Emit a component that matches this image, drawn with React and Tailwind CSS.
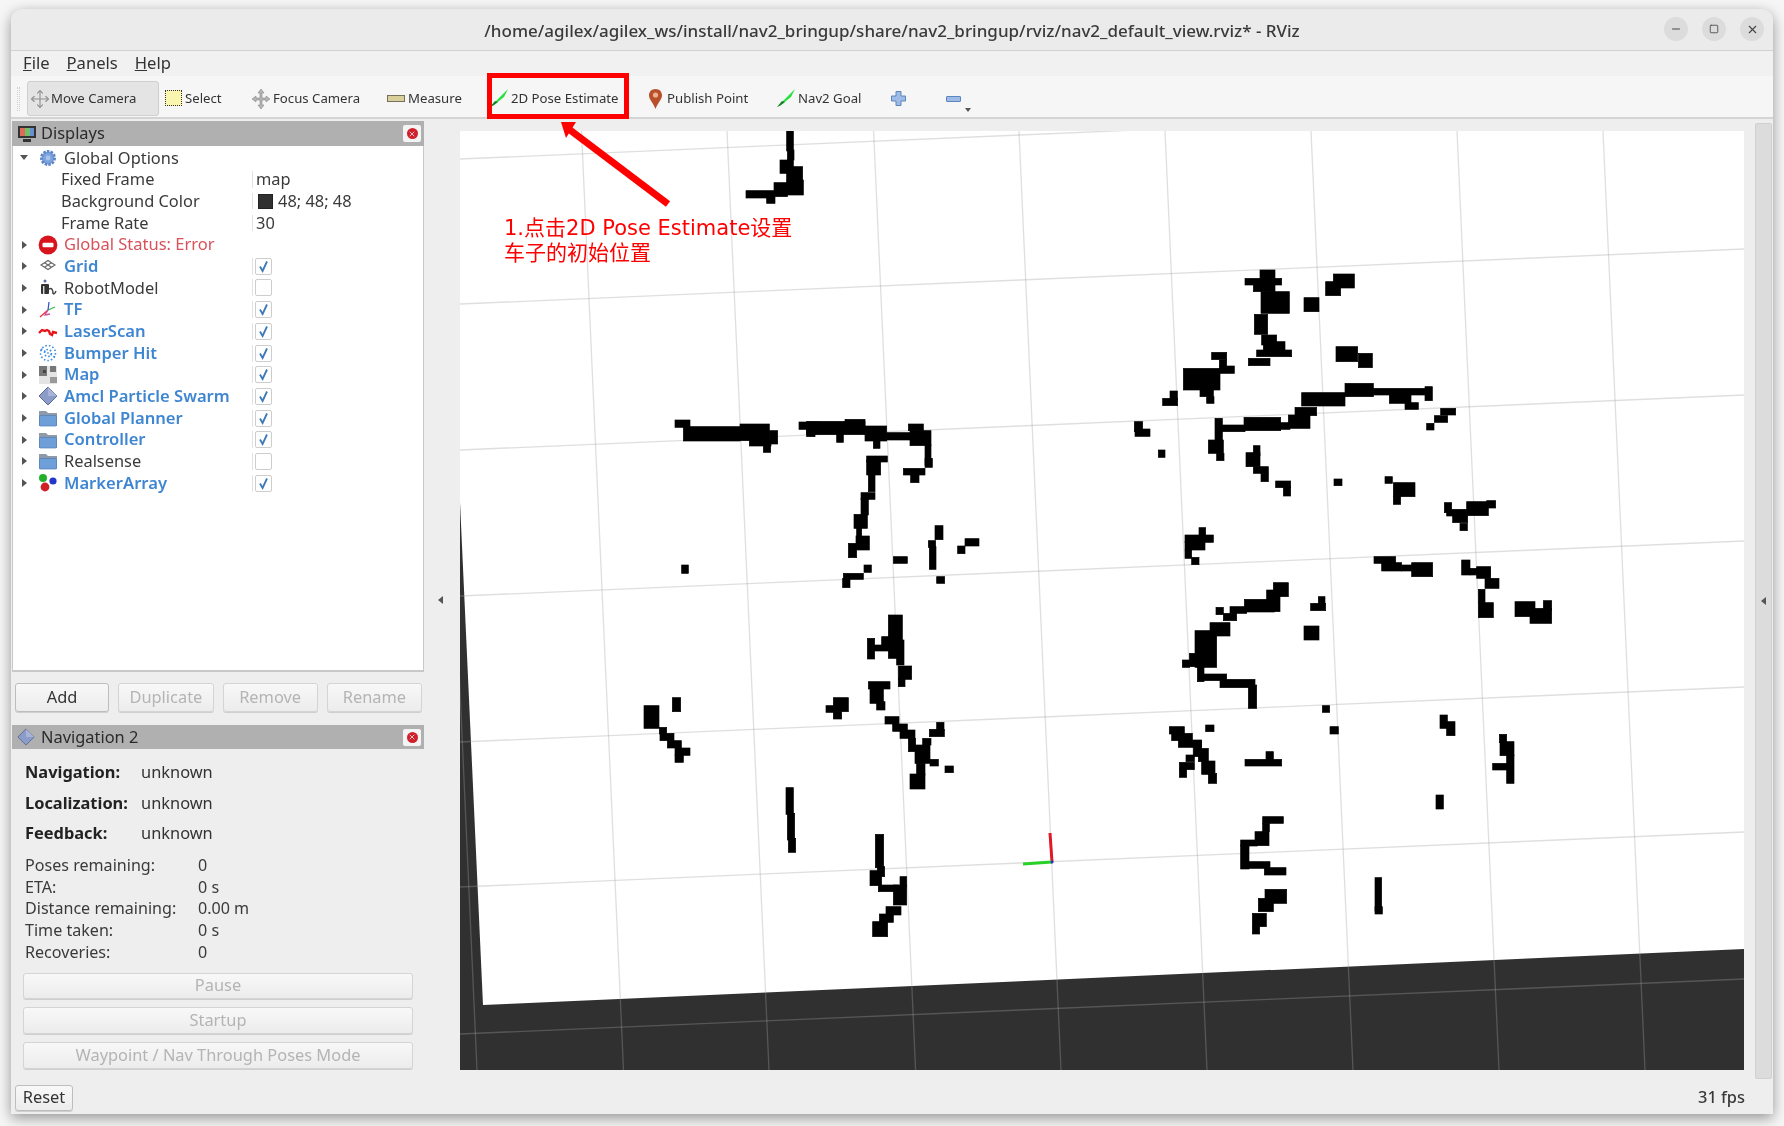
import { Minus, Square, X, Move } from 'lucide-react'

const UI_FONT = "font-['Noto_Sans','Open_Sans',sans-serif]"

// obstacle blocks, traced per crop: [originX, originY, rects in crop pixels (3x)]
const MAP_CHUNKS = [
  [450, 120, [[1010,33,20,60],[1012,90,20,30],[990,120,40,40],[1010,140,48,40],[1010,180,50,45],[972,188,40,42],[888,212,85,22],[950,225,25,25]]],
  [640, 380, [
    [105,120,45,22],[130,140,170,43],[300,132,88,50],[388,152,25,40],[328,180,65,18],[370,195,22,22],
    [477,126,60,22],[500,124,175,40],[500,145,25,25],[590,160,20,27],[615,118,60,40],[675,138,65,45],[700,180,20,25],[740,158,70,22],[805,132,45,20],[810,152,63,45],[855,195,18,60],[855,235,22,27],[790,265,65,20],[812,285,25,23],
    [680,228,62,18],[680,240,42,45],[685,285,20,50],[663,338,42,20],[663,355,22,50],[642,403,40,42],[650,440,15,30],[648,468,40,42],[625,490,25,43],
    [125,555,20,25],[885,437,24,42],[865,482,22,20],[868,500,20,68],[975,476,42,22],[953,498,22,23],[760,530,42,20],[672,555,22,22],[610,580,60,18],[608,595,22,28],[890,590,24,20],
    [745,705,42,130],[682,775,22,62],[700,795,50,18],[725,770,30,40],[770,780,22,75],
  ]],
  [640, 620, [
    [775,138,40,40],[775,175,20,25],[685,185,65,22],[690,205,40,45],[710,245,25,25],
    [12,257,45,68],[97,233,25,42],[58,322,22,20],[60,340,42,22],[82,362,42,22],[105,384,45,22],[105,405,25,22],
    [580,233,45,42],[558,257,30,20],[580,275,25,22],
    [735,290,42,22],[758,312,44,22],[780,330,45,25],[805,355,22,40],[848,355,25,20],[868,328,45,22],[890,307,22,25],[825,375,45,55],[870,418,25,20],[830,430,25,35],[810,462,45,45],[915,438,25,20],
    [438,503,22,80],[442,580,22,80],[445,655,22,42],
    [706,643,25,100],[712,740,22,30],[690,752,35,45],[715,795,60,20],[760,795,40,60],[780,770,20,30],[738,860,45,25],[718,882,42,25],[698,905,45,45],
  ]],
  [1100, 250, [
    [480,60,45,40],[435,85,110,20],[460,100,65,25],[483,125,85,65],[463,193,40,60],[485,255,45,30],[490,275,65,30],[470,300,105,20],[445,325,65,22],
    [677,95,45,42],[700,72,63,42],[612,143,45,42],[708,290,65,45],[775,310,42,43],
    [335,307,45,22],[358,330,22,20],[358,348,45,22],[250,355,110,65],[300,415,40,25],[320,440,22,20],[188,445,45,22],[210,423,22,25],
    [345,505,22,70],[365,525,70,20],[432,502,110,40],[540,518,30,20],[565,495,65,40],[585,472,65,25],[605,428,130,40],[735,400,85,40],[820,415,175,20],[868,435,65,25],[915,458,40,20],[975,410,22,42],
    [325,570,45,40],[350,610,22,22],[1022,475,45,20],[1003,497,40,20],[980,520,22,20],[103,515,25,30],[105,537,45,22],[175,600,20,22],
    [460,587,20,30],[438,608,42,42],[460,650,45,20],[483,670,22,25],[527,693,45,20],[550,710,22,28],[702,687,24,20],
    [855,680,22,20],[880,698,65,42],[880,738,22,25],[1033,758,22,30],[1040,778,60,20],[1058,798,45,20],[1080,820,22,22],[1100,755,65,42],[1160,752,27,22],
    [297,833,20,25],[255,855,85,22],[255,875,60,25],[255,900,20,25],[275,922,22,22],
    [822,920,65,20],[845,938,60,25],[905,945,30,18],[935,938,63,42],[1085,930,25,45],[1110,955,60,20],[1130,950,42,35],[1155,985,42,30],[1135,1018,20,40],[1135,1058,45,45],[1245,1055,60,45],[1290,1075,65,45],[1330,1052,25,30],
    [500,1020,40,65],[520,998,45,42],[433,1048,90,38],[390,1070,50,20],[370,1090,40,22],[348,1072,22,22],[632,1060,45,22],[655,1040,20,22],
  ]],
  [1140, 600, [
    [165,92,65,110],[210,68,60,40],[148,160,65,40],[127,180,22,22],[172,200,20,45],[190,222,70,20],[240,238,105,25],[325,255,25,70],
    [492,78,45,42],[547,317,22,20],[570,380,25,22],
    [88,380,45,22],[95,400,62,22],[115,420,70,22],[160,425,25,45],[175,445,30,40],[185,483,40,40],[205,520,25,30],[138,465,25,20],[118,487,45,22],[118,507,22,25],
    [197,375,25,20],[315,478,110,20],[378,455,22,25],[900,345,22,40],[920,365,25,42],
    [1078,403,22,25],[1080,425,42,42],[1100,465,22,85],[1058,490,50,20],[888,585,22,42],
    [368,650,62,20],[368,670,20,25],[345,695,42,42],[302,720,50,18],[302,735,25,72],[325,785,65,20],[373,803,65,22],
    [705,833,20,100],[705,920,22,22],[375,868,65,42],[355,895,45,40],[337,940,42,40],[337,980,22,22],
  ]],
]

const VERTICALS = [477, 623.5, 769, 915.6, 1061, 1207, 1353, 1499, 1645]
const HORIZONTALS = [159, 304, 450, 596, 742, 887, 1034]

function GearIcon() {
  return (
    <svg width="18" height="18" viewBox="0 0 18 18">
      <circle cx="9" cy="9" r="6.5" fill="#7da3dc" stroke="#5f87c8" strokeWidth="3" strokeDasharray="2.4 1.2" />
      <circle cx="9" cy="9" r="2.4" fill="#a9c3ea" />
    </svg>
  )
}

function GridIcon() {
  return (
    <svg width="18" height="18" viewBox="0 0 18 18" fill="none" stroke="#666" strokeWidth="1.1">
      <path d="M2 8 L9 3.5 L16 8 L9 12.5 Z" />
      <path d="M5.5 5.8 L12.5 10.2 M12.5 5.8 L5.5 10.2" />
    </svg>
  )
}

function RobotIcon() {
  return (
    <svg width="20" height="20" viewBox="0 0 20 20">
      <circle cx="7" cy="3" r="1.5" fill="#5570a8" />
      <rect x="3" y="6" width="8" height="10" rx="1" fill="#333" />
      <rect x="5" y="8" width="1.4" height="8" fill="#ddd" />
      <path d="M11 11 Q15 9 15 16 M15 16 Q17 16 18 13" stroke="#444" strokeWidth="1.4" fill="none" />
    </svg>
  )
}

function TfIcon() {
  return (
    <svg width="20" height="20" viewBox="0 0 20 20" strokeWidth="1.3" fill="none">
      <path d="M10 10 L2 17" stroke="#e03030" />
      <path d="M10 10 L17 7" stroke="#30c040" />
      <path d="M10 10 L11 2" stroke="#3050d0" />
      <path d="M10 10 L7 15 L12 14" stroke="#d050a0" />
    </svg>
  )
}

function LaserIcon() {
  return (
    <svg width="20" height="20" viewBox="0 0 20 20" fill="none">
      <path d="M1 12 L4 9 L7 10 L9 9 L11 10 L12 13 L14 14 L15 11 L19 12" stroke="#e8141c" strokeWidth="2.4" />
    </svg>
  )
}

function BumperIcon() {
  return (
    <svg width="20" height="20" viewBox="0 0 20 20" stroke="#3f8fe0" strokeWidth="1.6" strokeDasharray="1.6 2" fill="none">
      <circle cx="10" cy="10" r="7.5" />
      <circle cx="10" cy="10" r="3.5" />
      <path d="M3 6 L17 14" />
    </svg>
  )
}

function MapIcon() {
  return (
    <svg width="20" height="20" viewBox="0 0 20 20">
      <rect x="1" y="1" width="18" height="18" fill="#e4e4e4" />
      <rect x="1" y="1" width="8" height="10" fill="#777" />
      <rect x="12" y="1" width="6" height="6" fill="#777" />
      <rect x="12" y="12" width="7" height="6" fill="#999" />
      <rect x="5" y="5" width="3" height="3" fill="#444" />
    </svg>
  )
}

function DiamondIcon({ size = 20 }) {
  return (
    <svg width={size} height={size} viewBox="0 0 20 20">
      <path d="M10 1 L19 10 L10 19 L1 10 Z" fill="#8c9cc8" stroke="#5d6a94" strokeWidth="1" />
      <path d="M10 1 L19 10 L10 10 Z" fill="#a8b4d6" />
    </svg>
  )
}

function FolderIcon() {
  return (
    <svg width="20" height="20" viewBox="0 0 20 20">
      <path d="M1 3 L8 3 L10 5 L19 5 L19 18 L1 18 Z" fill="#8f9aa8" />
      <rect x="1.5" y="7.5" width="17" height="10.5" rx="1" fill="#6f9fd8" stroke="#4f7fb8" strokeWidth="0.7" />
    </svg>
  )
}

function MarkerIcon() {
  return (
    <svg width="20" height="20" viewBox="0 0 20 20">
      <circle cx="5" cy="5" r="4" fill="#22b02a" />
      <circle cx="15" cy="8" r="3.6" fill="#2236c8" />
      <circle cx="7" cy="14" r="4.4" fill="#d01f25" />
    </svg>
  )
}

function ErrorIcon() {
  return (
    <svg width="20" height="20" viewBox="0 0 20 20">
      <circle cx="10" cy="10" r="9.4" fill="#d8141c" />
      <rect x="4.5" y="7.8" width="11" height="4.4" rx="1" fill="#fff" />
    </svg>
  )
}

function Check() {
  return (
    <svg width="13" height="13" viewBox="0 0 13 13" fill="none">
      <path d="M3 6.5 L5.6 11 L10 1.5" stroke="#3d78b8" strokeWidth="1.8" />
    </svg>
  )
}

function Checkbox({ on }) {
  return (
    <span className="flex h-[17px] w-[17px] items-center justify-center rounded-[2px] border border-[#cdcdcd] bg-white">
      {on && <Check />}
    </span>
  )
}

function CloseBadge() {
  return (
    <span className="flex h-[17px] w-[18px] items-center justify-center rounded-[2px] bg-[#f4f4f4]">
      <span className="flex h-[11px] w-[11px] items-center justify-center rounded-full bg-[#d0202c]">
        <X size={8} strokeWidth={3} color="#f3c0c0" />
      </span>
    </span>
  )
}

function TreeRow({ icon, name, kind, checked, value, arrow = 'right', indent }) {
  const nameColor =
    kind === 'on'
      ? 'text-[16.6px] text-[#3f86d2] font-semibold'
      : kind === 'error'
        ? 'text-[16.5px] text-[#d8525a]'
        : 'text-[#3a3a3a]'
  return (
    <div className="flex h-[21.7px] items-center text-[16.4px] leading-none">
      <div className="flex w-[239px] items-center">
        <span className="flex w-[20px] justify-center pl-[2px]">
          {arrow === 'right' && <span className="h-0 w-0 border-y-[4px] border-l-[5px] border-y-transparent border-l-[#555]" />}
          {arrow === 'down' && <span className="h-0 w-0 border-x-[4px] border-t-[5px] border-x-transparent border-t-[#555]" />}
        </span>
        {indent ? (
          <span className="w-[28px]" />
        ) : (
          <span className="flex w-[31px] items-center justify-center pr-[2px]">{icon}</span>
        )}
        <span className={`whitespace-nowrap ${nameColor}`}>{name}</span>
      </div>
      <div className="flex flex-1 items-center border-l border-[#e2e2e2] pl-[3px] text-[#3a3a3a]">
        {checked !== undefined ? <span className="-ml-[1px]"><Checkbox on={checked} /></span> : value}
      </div>
    </div>
  )
}

function QtButton({ children, disabled, className = '' }) {
  return (
    <button
      className={`flex items-center justify-center rounded-[3px] border bg-gradient-to-b from-[#f8f8f8] to-[#ececec] text-[16.4px] shadow-[0_1px_0_#cfcfcf] ${
        disabled ? 'border-[#d4d4d4] text-[#b4b4b4]' : 'border-[#bdbdbd] text-[#333]'
      } ${className}`}
    >
      {children}
    </button>
  )
}

function StatRow({ label, value }) {
  return (
    <div className="flex h-[21.7px] items-center text-[16.1px] text-[#3a3a3a]">
      <span className="w-[173px]">{label}</span>
      <span>{value}</span>
    </div>
  )
}

function BoldRow({ label }) {
  return (
    <div className="flex h-[30.7px] items-center text-[#333]">
      <span className="w-[116px] font-bold text-[#222]">{label}</span>
      <span>unknown</span>
    </div>
  )
}

function DisplaysPanel() {
  return (
    <div className="flex flex-col">
      <div className="flex h-[25px] items-center bg-[#b0b0b0] pl-[5px] pr-[3px] text-[16.4px] text-[#2b2b2b]">
        <svg width="20" height="20" viewBox="0 0 20 20" className="mr-[4px]">
          <rect x="1" y="2" width="18" height="12" fill="#333" />
          <rect x="3" y="4" width="5" height="8" fill="#e06a5a" />
          <rect x="8" y="4" width="5" height="8" fill="#6fbf6a" />
          <rect x="13" y="4" width="4" height="8" fill="#6a8fd0" />
          <rect x="6" y="15" width="8" height="3" fill="#333" />
        </svg>
        <span className="flex-1">Displays</span>
        <CloseBadge />
      </div>
      <div className="h-[526px] border-x border-b-2 border-[#c8c8c8] bg-white pt-[1px]">
        <TreeRow arrow="down" icon={<GearIcon />} name="Global Options" />
        <TreeRow arrow="none" indent name="Fixed Frame" value="map" />
        <TreeRow
          arrow="none"
          indent
          name="Background Color"
          value={
            <span className="flex items-center gap-[5px] pl-[2px]">
              <span className="h-[15px] w-[15px] border border-[#222] bg-[#303030]" />
              48; 48; 48
            </span>
          }
        />
        <TreeRow arrow="none" indent name="Frame Rate" value="30" />
        <TreeRow icon={<ErrorIcon />} name="Global Status: Error" kind="error" />
        <TreeRow icon={<GridIcon />} name="Grid" kind="on" checked />
        <TreeRow icon={<RobotIcon />} name="RobotModel" checked={false} />
        <TreeRow icon={<TfIcon />} name="TF" kind="on" checked />
        <TreeRow icon={<LaserIcon />} name="LaserScan" kind="on" checked />
        <TreeRow icon={<BumperIcon />} name="Bumper Hit" kind="on" checked />
        <TreeRow icon={<MapIcon />} name="Map" kind="on" checked />
        <TreeRow icon={<DiamondIcon />} name="Amcl Particle Swarm" kind="on" checked />
        <TreeRow icon={<FolderIcon />} name="Global Planner" kind="on" checked />
        <TreeRow icon={<FolderIcon />} name="Controller" kind="on" checked />
        <TreeRow icon={<FolderIcon />} name="Realsense" checked={false} />
        <TreeRow icon={<MarkerIcon />} name="MarkerArray" kind="on" checked />
      </div>
      <div className="flex gap-[9px] pl-[3px] pr-[2px] pt-[11px]">
        <QtButton className="h-[29px] w-[95px]">Add</QtButton>
        <QtButton disabled className="h-[29px] w-[96px]">Duplicate</QtButton>
        <QtButton disabled className="h-[29px] w-[96px]">Remove</QtButton>
        <QtButton disabled className="h-[29px] w-[96px]">Rename</QtButton>
      </div>
    </div>
  )
}

function NavigationPanel() {
  return (
    <div className="mt-[13px] flex flex-1 flex-col text-[16.4px]">
      <div className="flex h-[24px] items-center bg-[#b0b0b0] pl-[5px] pr-[3px] text-[#2b2b2b]">
        <DiamondIcon size={18} />
        <span className="ml-[6px] flex-1">Navigation 2</span>
        <CloseBadge />
      </div>
      <div className="pl-[13px] pt-[8px]">
        <BoldRow label="Navigation:" />
        <BoldRow label="Localization:" />
        <BoldRow label="Feedback:" />
        <div className="mt-[5px]">
          <StatRow label="Poses remaining:" value="0" />
          <StatRow label="ETA:" value="0 s" />
          <StatRow label="Distance remaining:" value="0.00 m" />
          <StatRow label="Time taken:" value="0 s" />
          <StatRow label="Recoveries:" value="0" />
        </div>
      </div>
      <div className="flex flex-col gap-[8px] pl-[11px] pr-[11px] pt-[10px]">
        <QtButton disabled className="h-[26px] w-full">Pause</QtButton>
        <QtButton disabled className="h-[27px] w-full">Startup</QtButton>
        <QtButton disabled className="h-[27px] w-full">Waypoint / Nav Through Poses Mode</QtButton>
      </div>
    </div>
  )
}

function Viewport() {
  const plane = '460,131 1744,131 1744,949 483,1005 460,502'
  return (
    <div className="h-[939px] w-[1284px] overflow-hidden">
      <svg width="1284" height="939" viewBox="460 131 1284 939" className="block bg-[#303030]">
        <polygon points={plane} fill="#ffffff" />
        <g stroke="#a0a0a0" strokeOpacity="0.34" strokeWidth="1.3">
          {VERTICALS.map((x) => (
            <line key={x} x1={x - 42} y1={131} x2={x} y2={1070} />
          ))}
          {HORIZONTALS.map((y) => (
            <line key={y} x1={460} y1={y} x2={1744} y2={y - 55} />
          ))}
        </g>
        <g fill="#000000" stroke="#000000" strokeWidth="2">
          {MAP_CHUNKS.map(([ox, oy, rects], i) => (
            <g key={i} transform={`translate(${ox} ${oy}) scale(${1 / 3})`}>
              {rects.map((r, j) => (
                <rect key={j} x={r[0]} y={r[1]} width={r[2]} height={r[3]} />
              ))}
            </g>
          ))}
        </g>
        <line x1="1050" y1="833" x2="1052" y2="862" stroke="#e01828" strokeWidth="3" />
        <line x1="1023" y1="864" x2="1052" y2="862" stroke="#28d028" strokeWidth="3" />
        <circle cx="1052" cy="862" r="1.5" fill="#2030d0" />
      </svg>
    </div>
  )
}

function ToolItem({ icon, label, width, gap = 'gap-[2px]' }) {
  return (
    <div className={`flex shrink-0 items-center ${gap} ${width}`}>
      {icon}
      <span className="whitespace-nowrap text-[13.2px] text-[#333]">{label}</span>
    </div>
  )
}

function PoseArrow() {
  return (
    <svg width="18" height="18" viewBox="0 0 18 18">
      <path d="M0 18 L12 6 L18 0 L14 8 L4 16 Z" fill="#28e040" />
      <path d="M0 18 L5 12 L8 13 L4 16 Z" fill="#14802a" />
    </svg>
  )
}

function Toolbar() {
  return (
    <div className="flex h-[43px] items-center border-b-2 border-[#d4d4d4] bg-[#f6f6f6] pl-[6px] pt-[4px]">
      <div className="mr-[7px] h-[24px] w-[3px] border-x border-dotted border-[#cfcfcf]" />
      <div className="mr-[6px] flex h-[35px] w-[132px] items-center gap-[1px] rounded-[3px] border border-[#cfcfcf] bg-[#e4e4e4] pl-[2px]">
        <Move size={20} color="#8d8d8d" strokeWidth={1.3} />
        <span className="whitespace-nowrap text-[13.2px] text-[#333]">Move Camera</span>
      </div>
      <ToolItem
        width="w-[87px]"
        gap="gap-[3px]"
        icon={<span className="h-[16px] w-[17px] border border-dotted border-[#333] bg-[#faf6b0]" />}
        label="Select"
      />
      <ToolItem
        width="w-[135px]"
        gap="gap-[3px]"
        icon={
          <svg width="18" height="20" viewBox="0 0 18 20">
            <path d="M9 0 L12 4 L10 4 L10 9 L14 9 L14 7 L18 10 L14 13 L14 11 L10 11 L10 16 L12 16 L9 20 L6 16 L8 16 L8 11 L4 11 L4 13 L0 10 L4 7 L4 9 L8 9 L8 4 L6 4 Z" fill="#b4b4b4" stroke="#8c8c8c" strokeWidth="0.6" />
          </svg>
        }
        label="Focus Camera"
      />
      <ToolItem
        width="w-[103px]"
        gap="gap-[3px]"
        icon={<span className="h-[7px] w-[18px] border border-[#77705a] bg-[#d8cf9a]" />}
        label="Measure"
      />
      <ToolItem width="w-[159px]" gap="gap-[3px]" icon={<PoseArrow />} label="2D Pose Estimate" />
      <ToolItem
        width="w-[128px]"
        gap="gap-[5px]"
        icon={
          <svg width="13" height="20" viewBox="0 0 13 20">
            <path d="M6.5 0 C10.5 0 13 2.8 13 6.4 C13 10.5 8.5 14 6.5 20 C4.5 14 0 10.5 0 6.4 C0 2.8 2.5 0 6.5 0 Z" fill="#b8502c" />
            <circle cx="6.5" cy="6" r="2.6" fill="#f0b090" />
          </svg>
        }
        label="Publish Point"
      />
      <ToolItem width="w-[114px]" gap="gap-[3px]" icon={<PoseArrow />} label="Nav2 Goal" />
      <svg width="15" height="15" viewBox="0 0 15 15" className="mr-[40px]">
        <path d="M5 0.5 H10 V5 H14.5 V10 H10 V14.5 H5 V10 H0.5 V5 H5 Z" fill="#9dbbe4" stroke="#5a86c0" strokeWidth="1" />
      </svg>
      <div className="relative flex h-[6px] w-[15px] rounded-[1px] border border-[#5a86c0] bg-[#9dbbe4]">
        <span className="absolute left-[18px] top-[11px] h-0 w-0 border-x-[3px] border-t-[4px] border-x-transparent border-t-[#555]" />
      </div>
    </div>
  )
}

function TitleBar() {
  return (
    <div className="relative flex h-[42px] items-center justify-center rounded-t-[12px] border-b border-[#d2d2d2] bg-[#ebebeb] pt-[2px]">
      <span className="whitespace-nowrap text-[17px] font-medium text-[#3a3a3a]">
        /home/agilex/agilex_ws/install/nav2_bringup/share/nav2_bringup/rviz/nav2_default_view.rviz* - RViz
      </span>
      <div className="absolute right-[9px] top-[8px] flex gap-[14px]">
        <span className="flex h-[24px] w-[24px] items-center justify-center rounded-full bg-[#dcdcdc]">
          <Minus size={12} color="#444" strokeWidth={2} />
        </span>
        <span className="flex h-[24px] w-[24px] items-center justify-center rounded-full bg-[#dcdcdc]">
          <Square size={10} color="#444" strokeWidth={2} />
        </span>
        <span className="flex h-[24px] w-[24px] items-center justify-center rounded-full bg-[#dcdcdc]">
          <X size={13} color="#444" strokeWidth={2} />
        </span>
      </div>
    </div>
  )
}

function MenuBar() {
  return (
    <div className="flex h-[25px] items-center gap-[17px] bg-[#f1f1f1] pl-[12px] text-[16.6px] text-[#333]">
      <span><span className="underline">F</span>ile</span>
      <span><span className="underline">P</span>anels</span>
      <span><span className="underline">H</span>elp</span>
    </div>
  )
}

export default function App() {
  return (
    <div className={`relative h-[1126px] w-[1784px] overflow-hidden bg-[#f6f6f6] pl-[11px] pt-[9px] blur-[0.4px] ${UI_FONT}`}>
      <div className="flex h-[1105px] w-[1762px] flex-col rounded-t-[12px] bg-[#eeeeee] shadow-[0_4px_14px_rgba(0,0,0,0.4)]">
        <TitleBar />
        <MenuBar />
        <Toolbar />

        <div className="flex flex-1">
          <div className="flex w-[413px] shrink-0 flex-col pl-[1px] pt-[2px]">
            <DisplaysPanel />
            <NavigationPanel />
          </div>
          <div className="flex w-[36px] shrink-0 items-center justify-center pr-[4px]">
            <span className="h-0 w-0 border-y-[4px] border-r-[5px] border-y-transparent border-r-[#555]" />
          </div>
          <div className="pt-[12px]">
            <Viewport />
          </div>
          <div className="ml-[11px] mt-[4px] flex h-[956px] w-[17px] items-center justify-center rounded-[2px] border border-[#d0d0d0] bg-[#dcdcdc]">
            <span className="h-0 w-0 border-y-[4px] border-r-[5px] border-y-transparent border-r-[#555]" />
          </div>
        </div>

        <div className="flex h-[33px] items-center justify-between pl-[4px] pr-[28px] text-[16.4px]">
          <QtButton className="h-[26px] w-[58px]">Reset</QtButton>
          <span className="font-medium text-[#3a3a3a]">31 fps</span>
        </div>
      </div>

      {/* annotation drawn over the screenshot */}
      <div className="absolute left-[487px] top-[73px] h-[46px] w-[142px] border-[5px] border-[#ff0000]" />
      <svg width="130" height="100" viewBox="550 115 130 100" className="absolute left-[550px] top-[115px]">
        <line x1="668" y1="204" x2="570" y2="130" stroke="#ff0000" strokeWidth="7" />
        <polygon points="561,122 576,122 566,138" fill="#ff0000" />
      </svg>
      <div className="absolute left-[504px] top-[216px] font-['DejaVu_Sans','Noto_Sans_CJK_SC',sans-serif] text-[21px] leading-[25px] text-[#ff0000]">
        <div className="whitespace-nowrap">1.点击2D Pose Estimate设置</div>
        <div className="whitespace-nowrap">车子的初始位置</div>
      </div>
    </div>
  )
}
